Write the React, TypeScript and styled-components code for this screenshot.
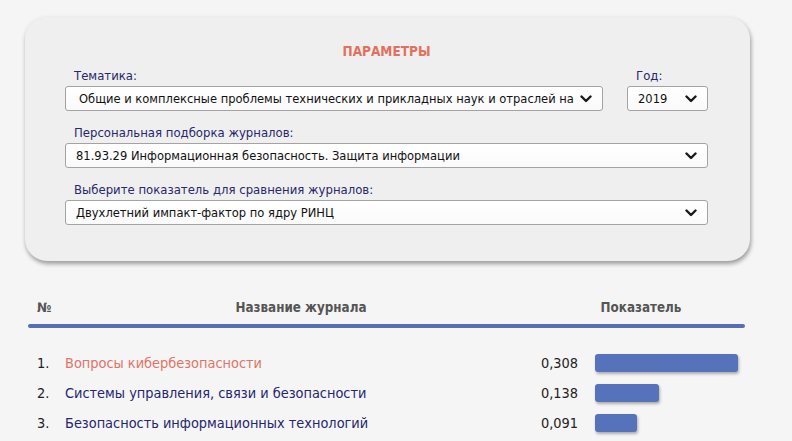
import React from "react";
import styled, { createGlobalStyle } from "styled-components";

const GlobalStyle = createGlobalStyle`
  html, body {
    margin: 0;
    padding: 0;
    background: #f5f5f5;
  }
  body {
    font-family: "DejaVu Sans Condensed", "DejaVu Sans", Verdana, sans-serif;
    font-stretch: condensed;
  }
`;

const journals = [
  { title: "Вопросы кибербезопасности", value: 0.308, active: true },
  { title: "Системы управления, связи и безопасности", value: 0.138 },
  { title: "Безопасность информационных технологий", value: 0.091 },
];

const maxValue = 0.308;
const maxBar = 143;

const Chevron = () => (
  <ChevronSvg viewBox="0 0 12 8" width="12" height="8">
    <polyline points="1.5,1.5 6,6 10.5,1.5" />
  </ChevronSvg>
);

const Select = ({ value, inset = 10 }: { value: string; inset?: number }) => (
  <SelectBox $inset={inset}>
    <SelectText>{value}</SelectText>
    <Chevron />
  </SelectBox>
);

export default function App() {
  return (
    <>
      <GlobalStyle />
      <Page>
        <Panel>
          <PanelTitle>ПАРАМЕТРЫ</PanelTitle>
          <TopRow>
            <Field>
              <Label>Тематика:</Label>
              <Select
                inset={13}
                value="Общие и комплексные проблемы технических и прикладных наук и отраслей народного хозяйства"
              />
            </Field>
            <Field>
              <Label>Год:</Label>
              <Select value="2019" />
            </Field>
          </TopRow>
          <Field>
            <Label>Персональная подборка журналов:</Label>
            <Select value="81.93.29 Информационная безопасность. Защита информации" />
          </Field>
          <Field>
            <Label>Выберите показатель для сравнения журналов:</Label>
            <Select value="Двухлетний импакт-фактор по ядру РИНЦ" />
          </Field>
        </Panel>

        <Table>
          <HeaderRow>
            <HeadCell>№</HeadCell>
            <HeadCell $center>Название журнала</HeadCell>
            <HeadCell $center $span={2}>
              Показатель
            </HeadCell>
          </HeaderRow>
          <Divider />
          <Rows>
            {journals.map((j, i) => (
              <Row key={j.title}>
                <Num>{i + 1}.</Num>
                <JournalName $active={j.active}>{j.title}</JournalName>
                <Value>{j.value.toFixed(3).replace(".", ",")}</Value>
                <BarTrack>
                  <Bar style={{ width: Math.round((j.value / maxValue) * maxBar) }} />
                </BarTrack>
              </Row>
            ))}
          </Rows>
        </Table>
      </Page>
    </>
  );
}

const Page = styled.div`
  padding: 17px 0 0 25px;
  width: 792px;
  box-sizing: border-box;
`;

const Panel = styled.div`
  width: 725px;
  box-sizing: border-box;
  padding: 27px 42px 36px 40px;
  background: #efefef;
  border-radius: 22px;
  box-shadow: 1px 3px 4px rgba(0, 0, 0, 0.35), 0 0 6px rgba(0, 0, 0, 0.04);
  display: flex;
  flex-direction: column;
  gap: 14px;
`;

const PanelTitle = styled.div`
  text-align: center;
  font-size: 13.5px;
  line-height: 14px;
  font-weight: bold;
  color: #e2705e;
  margin-bottom: -4px;
`;

const TopRow = styled.div`
  display: grid;
  grid-template-columns: minmax(0, 1fr) 81px;
  column-gap: 24px;
`;

const Field = styled.div`
  display: flex;
  flex-direction: column;
  gap: 2px;
  min-width: 0;
`;

const Label = styled.div`
  padding-left: 9px;
  font-size: 13px;
  line-height: 16px;
  color: #28286a;
`;

const SelectBox = styled.div<{ $inset: number }>`
  height: 25px;
  min-width: 0;
  box-sizing: border-box;
  display: flex;
  align-items: center;
  gap: 6px;
  padding: 0 10px 0 ${(p) => p.$inset}px;
  background: linear-gradient(#ffffff, #fafafa);
  border: 1px solid #a3a3a3;
  border-radius: 3px;
  font-size: 12.8px;
  color: #111;
`;

const SelectText = styled.span`
  flex: 1;
  min-width: 0;
  white-space: nowrap;
  overflow: hidden;
  text-overflow: clip;
`;

const ChevronSvg = styled.svg`
  flex-shrink: 0;
  fill: none;
  stroke: #1a1a1a;
  stroke-width: 2.4;
  stroke-linecap: round;
  stroke-linejoin: round;
`;

const Table = styled.div`
  width: 717px;
  margin: 38px 0 0 3px;
`;

const grid = `
  display: grid;
  grid-template-columns: 37px 472px 41px 17px 150px;
  align-items: center;
`;

const HeaderRow = styled.div`
  ${grid}
  height: 16px;
`;

const HeadCell = styled.div<{ $center?: boolean; $span?: number }>`
  grid-column: span ${(p) => (p.$span ? p.$span + 1 : 1)};
  padding-left: ${(p) => (p.$center ? 0 : 9)}px;
  text-align: ${(p) => (p.$center ? "center" : "left")};
  font-size: 13.3px;
  font-weight: bold;
  color: #555555;
`;

const Divider = styled.div`
  margin-top: 9px;
  height: 4px;
  border-radius: 2px;
  background: #5470b2;
`;

const Rows = styled.div`
  margin-top: 20px;
  display: flex;
  flex-direction: column;
`;

const Row = styled.div`
  ${grid}
  height: 30px;
  font-size: 14.4px;
`;

const Num = styled.div`
  padding-left: 9px;
  color: #222;
`;

const JournalName = styled.div<{ $active?: boolean }>`
  color: ${(p) => (p.$active ? "#e07466" : "#26266e")};
  white-space: nowrap;
`;

const Value = styled.div`
  text-align: right;
  color: #222;
  grid-column: 3;
`;

const BarTrack = styled.div`
  grid-column: 5;
  display: flex;
  align-items: center;
`;

const Bar = styled.div`
  height: 18px;
  border-radius: 3px;
  background: #5572bb;
  box-shadow: 1px 2px 3px rgba(0, 0, 0, 0.3);
`;
